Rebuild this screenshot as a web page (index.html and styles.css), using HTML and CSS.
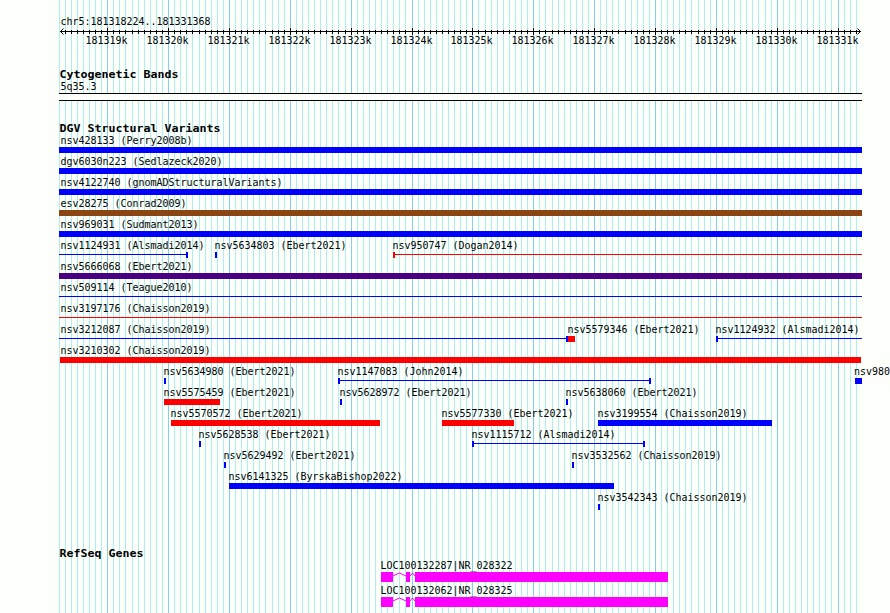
FILE: index.html
```
<!DOCTYPE html>
<html lang="en">
<head>
    <meta charset="UTF-8">
    <meta name="viewport" content="width=device-width, initial-scale=1.0">
    <title>chr5:181318224..181331368</title>
    <link rel="stylesheet" href="styles.css">
</head>
<body>
    <svg id="browser" class="browser" width="890" height="613" viewBox="0 0 890 613"></svg>
    <script src="browser.js"></script>
</body>
</html>
```
FILE: styles.css
```
body {
    margin: 0;
    background-color: #fdfffb;
    overflow: hidden;
}
.browser {
    display: block;
    shape-rendering: crispEdges;
}
text {
    font-family: "DejaVu Sans Mono", "Liberation Mono", monospace;
    font-size: 11px;
    fill: #000000;
    white-space: pre;
}
.title {
    font-weight: bold;
}
.minor {
    fill: #afeeee;
}
.major {
    fill: #87ceeb;
}
.black {
    fill: #000000;
}
.blank {
    fill: #fdfffb;
}
.blue {
    fill: #0000ff;
}
.red {
    fill: #ff0000;
}
.brown {
    fill: #8b4513;
}
.indigo {
    fill: #4b0082;
}
.magenta {
    fill: #ff00ff;
}
.arrow {
    fill: none;
    stroke: #000000;
    shape-rendering: auto;
}
.intron {
    fill: none;
    stroke: #ff00ff;
    shape-rendering: auto;
}
```
FILE: browser.js
```
const svg = document.getElementById('browser');
const START = 181318224;
const END = 181331368;
const LEFT = 59;
const RIGHT = 862;

function add(tag, attrs) {
    const el = document.createElementNS('http://www.w3.org/2000/svg', tag);
    for (const key in attrs) el.setAttribute(key, attrs[key]);
    svg.appendChild(el);
    return el;
}

function rect(x, y, width, height, cls) {
    add('rect', { x, y, width, height, class: cls });
}

// every glyph takes a fixed cell: 6px for labels, 7px for titles
function label(str, x, y, cls = 'label') {
    const cell = cls === 'title' ? 7 : 6;
    const el = add('text', { x, y, class: cls, textLength: str.length * cell, lengthAdjust: 'spacingAndGlyphs' });
    el.textContent = str;
}

function toX(pos) {
    return 60 + Math.round((pos - START) * 800 / (END - START + 1));
}

// grid and ruler
for (let pos = 181318200; pos <= END; pos += 100) {
    rect(toX(pos), 0, 1, 613, pos % 1000 ? 'minor' : 'major');
}
label('chr5:181318224..181331368', 60.5, 25);
rect(60, 31, 801, 1, 'black');
add('path', { d: 'M63.5 28.5L60.5 31.5L63.5 34.5M857.5 28.5L860.5 31.5L857.5 34.5', class: 'arrow' });
for (let pos = 181318300; pos <= END; pos += 100) {
    const x = toX(pos);
    if (pos % 1000) {
        rect(x, 30, 1, 4, 'black');
    } else {
        rect(x, 28, 1, 7, 'black');
        label(pos / 1000 + 'k', x - 21.5, 44);
    }
}

// cytogenetic band
label('Cytogenetic Bands', 59.5, 78, 'title');
label('5q35.3', 60.5, 90);
rect(LEFT, 93, 803, 8, 'black');
rect(LEFT, 94, 803, 6, 'blank');

// structural variants: [name, shape, colour, from, to]
// shapes: bar, line, lineEnd (cap on the right), lineStart (cap on the left), span (both), tick
const rows = [
    [['nsv428133 (Perry2008b)', 'bar', 'blue', LEFT, RIGHT]],
    [['dgv6030n223 (Sedlazeck2020)', 'bar', 'blue', LEFT, RIGHT]],
    [['nsv4122740 (gnomADStructuralVariants)', 'bar', 'blue', LEFT, RIGHT]],
    [['esv28275 (Conrad2009)', 'bar', 'brown', LEFT, RIGHT]],
    [['nsv969031 (Sudmant2013)', 'bar', 'blue', LEFT, RIGHT]],
    [
        ['nsv1124931 (Alsmadi2014)', 'lineEnd', 'blue', LEFT, 188],
        ['nsv5634803 (Ebert2021)', 'tick', 'blue', 215, 217],
        ['nsv950747 (Dogan2014)', 'lineStart', 'red', 393, RIGHT]
    ],
    [['nsv5666068 (Ebert2021)', 'bar', 'indigo', LEFT, RIGHT]],
    [['nsv509114 (Teague2010)', 'line', 'blue', LEFT, RIGHT]],
    [['nsv3197176 (Chaisson2019)', 'line', 'red', LEFT, RIGHT]],
    [
        ['nsv3212087 (Chaisson2019)', 'lineEnd', 'blue', LEFT, 568],
        ['nsv5579346 (Ebert2021)', 'bar', 'red', 568, 575],
        ['nsv1124932 (Alsmadi2014)', 'lineStart', 'blue', 716, RIGHT]
    ],
    [['nsv3210302 (Chaisson2019)', 'bar', 'red', 60, 861]],
    [
        ['nsv5634980 (Ebert2021)', 'tick', 'blue', 164, 166],
        ['nsv1147083 (John2014)', 'span', 'blue', 338, 651],
        ['nsv980', 'bar', 'blue', 855, RIGHT]
    ],
    [
        ['nsv5575459 (Ebert2021)', 'bar', 'red', 164, 220],
        ['nsv5628972 (Ebert2021)', 'tick', 'blue', 340, 342],
        ['nsv5638060 (Ebert2021)', 'tick', 'blue', 566, 568]
    ],
    [
        ['nsv5570572 (Ebert2021)', 'bar', 'red', 171, 380],
        ['nsv5577330 (Ebert2021)', 'bar', 'red', 442, 514],
        ['nsv3199554 (Chaisson2019)', 'bar', 'blue', 598, 772]
    ],
    [
        ['nsv5628538 (Ebert2021)', 'tick', 'blue', 199, 201],
        ['nsv1115712 (Alsmadi2014)', 'span', 'blue', 472, 645]
    ],
    [
        ['nsv5629492 (Ebert2021)', 'tick', 'blue', 224, 226],
        ['nsv3532562 (Chaisson2019)', 'tick', 'blue', 572, 574]
    ],
    [['nsv6141325 (ByrskaBishop2022)', 'bar', 'blue', 229, 614]],
    [['nsv3542343 (Chaisson2019)', 'tick', 'blue', 598, 600]]
];

label('DGV Structural Variants', 59.5, 132, 'title');
rows.forEach((row, i) => {
    const y = 147 + i * 21;
    row.forEach(([name, shape, colour, from, to]) => {
        // names start at the feature, the last one stays inside the right edge
        label(name, from <= 60 ? 60.5 : Math.min(from - 0.5, 854), y - 3);
        if (shape === 'bar' || shape === 'tick') {
            rect(from, y, to - from, 6, colour);
            return;
        }
        rect(from, y + 2, to - from, 1, colour);
        if (shape === 'lineStart' || shape === 'span') rect(from, y, 2, 6, colour);
        if (shape === 'lineEnd' || shape === 'span') rect(to - 2, y, 2, 6, colour);
    });
});

// genes
label('RefSeq Genes', 59.5, 557, 'title');
['LOC100132287|NR_028322', 'LOC100132062|NR_028325'].forEach((name, i) => {
    const y = 572 + i * 25;
    label(name, 380.5, y - 3);
    rect(381, y, 12, 10, 'magenta');
    rect(406, y, 4, 10, 'magenta');
    rect(415, y, 253, 10, 'magenta');
    add('path', { d: `M393 ${y + 4}L399.5 ${y + 1}L406 ${y + 4}M410 ${y + 4}L412.5 ${y + 1}L415 ${y + 4}`, class: 'intron' });
});
```
